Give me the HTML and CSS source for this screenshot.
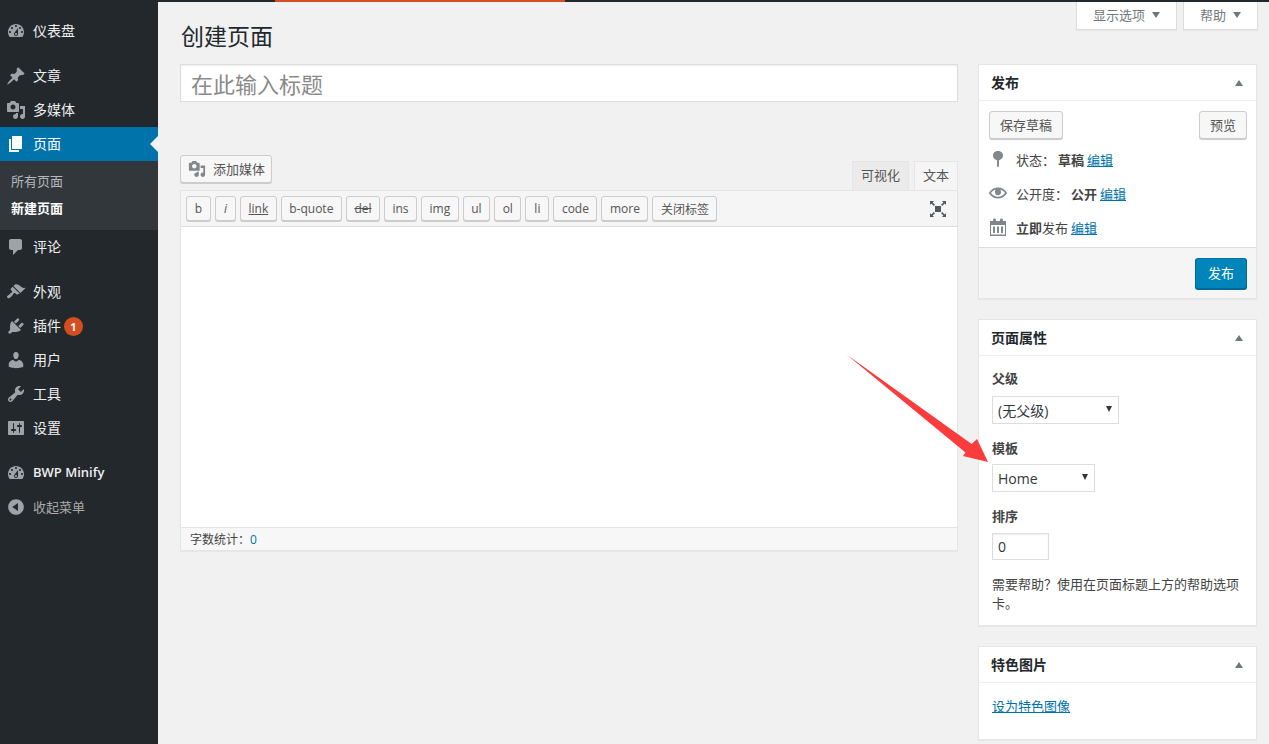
FILE: index.html
```html
<!DOCTYPE html>
<html lang="zh-CN">
<head>
    <meta charset="UTF-8">
    <meta name="viewport" content="width=device-width, initial-scale=1.0">
    <title>创建页面</title>
    <link rel="stylesheet" href="styles.css">
</head>
<body>
    <!-- Icon sprites -->
    <svg class="sprites" xmlns="http://www.w3.org/2000/svg">
        <symbol id="i-dashboard" viewBox="0 0 20 20"><path d="M3.76 16h12.48c1.1-1.37 1.76-3.11 1.76-5 0-4.42-3.58-8-8-8s-8 3.58-8 8c0 1.89.66 3.63 1.76 5zM10 4c.55 0 1 .45 1 1s-.45 1-1 1-1-.45-1-1 .45-1 1-1zM6 6c.55 0 1 .45 1 1s-.45 1-1 1-1-.45-1-1 .45-1 1-1zm8 0c.55 0 1 .45 1 1s-.45 1-1 1-1-.45-1-1 .45-1 1-1zm-5.37 5.55L12 7v6c0 1.1-.9 2-2 2s-2-.9-2-2c0-.57.24-1.08.63-1.45zM4 10c.55 0 1 .45 1 1s-.45 1-1 1-1-.45-1-1 .45-1 1-1zm12 0c.55 0 1 .45 1 1s-.45 1-1 1-1-.45-1-1 .45-1 1-1zm-5 3c0-.55-.45-1-1-1s-1 .45-1 1 .45 1 1 1 1-.45 1-1z" fill-rule="evenodd"/></symbol>
        <symbol id="i-post" viewBox="0 0 20 20"><path d="M10.44 3.02l1.82-1.82 6.36 6.35-1.83 1.82c-1.05-.68-2.48-.57-3.41.36l-.75.75c-.92.93-1.04 2.35-.35 3.41l-1.83 1.82-2.41-2.41-2.8 2.79c-.42.42-3.38 2.71-3.8 2.29s1.86-3.39 2.28-3.81l2.79-2.79L4.1 9.36l1.83-1.82c1.05.69 2.48.57 3.4-.36l.75-.75c.93-.92 1.05-2.35.36-3.41z"/></symbol>
        <symbol id="i-media" viewBox="0 0 20 20"><path d="M13 11V4c0-.55-.45-1-1-1h-1.67L9 1H5L3.67 3H2c-.55 0-1 .45-1 1v7c0 .55.45 1 1 1h10c.55 0 1-.45 1-1zM7 4.5c1.38 0 2.5 1.12 2.5 2.5S8.38 9.5 7 9.5 4.5 8.38 4.5 7 5.62 4.5 7 4.5zM14 6h5v10.5c0 1.38-1.12 2.5-2.5 2.5S14 17.88 14 16.5s1.12-2.5 2.5-2.5c.17 0 .34.02.5.05V9h-3V6zm-4 8.05V13h2v3.5c0 1.38-1.12 2.5-2.5 2.5S7 17.88 7 16.5 8.12 14 9.5 14c.17 0 .34.02.5.05z"/></symbol>
        <symbol id="i-page" viewBox="0 0 20 20"><path d="M6 15V2h10v13H6zm-1 1h8v2H3V5h2v11z"/></symbol>
        <symbol id="i-comments" viewBox="0 0 20 20"><path d="M5 2h9c1.1 0 2 .9 2 2v7c0 1.1-.9 2-2 2h-2l-5 5v-5H5c-1.1 0-2-.9-2-2V4c0-1.1.9-2 2-2z"/></symbol>
        <symbol id="i-appearance" viewBox="0 0 20 20"><path d="M14.48 11.06L7.41 3.99l1.5-1.5c.5-.56 2.3-.47 3.51.32 1.21.8 1.43 1.28 2.91 2.1 1.18.64 2.45 1.26 4.45.85zm-.71.71L6.7 4.7 4.93 6.47c-.39.39-.39 1.02 0 1.41l1.06 1.06c.39.39.39 1.03 0 1.42-.6.6-1.43 1.11-2.21 1.69-.35.26-.7.53-1.01.84C1.43 13.23.4 14.84 1.4 15.84c.99 1 2.6-.03 3.95-1.37.31-.31.58-.66.85-1.02.57-.78 1.08-1.61 1.69-2.21.39-.39 1.02-.39 1.41 0l1.06 1.06c.39.39 1.02.39 1.41 0z"/></symbol>
        <symbol id="i-plugins" viewBox="0 0 20 20"><path d="M13.11 4.36L9.87 7.6 8 5.73l3.24-3.24c.35-.34 1.05-.2 1.56.32.52.51.66 1.21.31 1.55zm-8 1.77l.91-1.12 9.01 9.01-1.19.84c-.71.71-2.63 1.16-3.82 1.16H6.14L4.9 17.26c-.59.59-1.54.59-2.12 0-.59-.58-.59-1.53 0-2.12l1.24-1.24v-3.88c0-1.13.4-3.19 1.09-3.89zm7.26 3.97l3.24-3.24c.34-.35 1.04-.21 1.55.31.52.51.66 1.21.31 1.55l-3.24 3.25z"/></symbol>
        <symbol id="i-users" viewBox="0 0 20 20"><path d="M10 9.25c-2.27 0-2.73-3.44-2.73-3.44C7 4.02 7.82 2 9.97 2c2.16 0 2.98 2.02 2.71 3.81 0 0-.41 3.44-2.68 3.44zm0 2.57L12.72 10c2.39 0 4.52 2.33 4.52 4.53v2.49s-3.65 1.13-7.24 1.13c-3.65 0-7.24-1.13-7.24-1.13v-2.49c0-2.25 1.94-4.48 4.47-4.48z"/></symbol>
        <symbol id="i-tools" viewBox="0 0 20 20"><path d="M16.68 9.77c-1.34 1.34-3.3 1.67-4.95.99l-5.41 6.52c-.99.99-2.59.99-3.58 0s-.99-2.59 0-3.57l6.52-5.42c-.68-1.65-.35-3.61.99-4.95 1.28-1.28 3.12-1.62 4.72-1.06l-2.89 2.89 2.82 2.82 2.86-2.87c.53 1.58.18 3.39-1.08 4.65zM3.81 16.21c.4.39 1.04.39 1.43 0 .4-.4.4-1.04 0-1.43-.39-.4-1.03-.4-1.43 0-.39.39-.39 1.03 0 1.43z"/></symbol>
        <symbol id="i-settings" viewBox="0 0 20 20"><path d="M18 16V4c0-.55-.45-1-1-1H3c-.55 0-1 .45-1 1v12c0 .55.45 1 1 1h14c.55 0 1-.45 1-1zM8 11h1c.55 0 1 .45 1 1s-.45 1-1 1H8v1.5c0 .28-.22.5-.5.5s-.5-.22-.5-.5V13H6c-.55 0-1-.45-1-1s.45-1 1-1h1V5.5c0-.28.22-.5.5-.5s.5.22.5.5V11zm5-2h-1c-.55 0-1-.45-1-1s.45-1 1-1h1V5.5c0-.28.22-.5.5-.5s.5.22.5.5V7h1c.55 0 1 .45 1 1s-.45 1-1 1h-1v5.5c0 .28-.22.5-.5.5s-.5-.22-.5-.5V9z"/></symbol>
        <symbol id="i-collapse" viewBox="0 0 20 20"><path d="M10 2.16c4.33 0 7.84 3.51 7.84 7.84s-3.51 7.84-7.84 7.84S2.16 14.33 2.16 10 5.71 2.16 10 2.16zm2 11.72V6.12L6.18 9.97z"/></symbol>
        <symbol id="i-pin" viewBox="0 0 20 20"><path d="M15 6.500c0 2.300-1.600 4.200-4 4.800V17l-1 1.500-1-1.500v-5.700c-2.400-.6-4-2.500-4-4.800C5 3.700 7.200 2 10 2s5 1.700 5 4.500z"/></symbol>
        <symbol id="i-eye" viewBox="-1 -1 22 22"><path d="M19.7 9.4C17.7 6 14 3.9 10 3.9S2.3 6 .3 9.4L0 10l.3.6c2 3.4 5.7 5.5 9.7 5.5s7.7-2.1 9.7-5.5l.3-.6-.3-.6zM10 14.1c-3.1 0-6-1.6-7.7-4.1C3.6 8 5.700 6.600 8 6.100c-.9.6-1.500 1.700-1.500 2.900 0 1.900 1.600 3.500 3.500 3.500s3.500-1.600 3.500-3.500c0-1.200-.6-2.300-1.500-2.900 2.300.5 4.400 1.900 5.700 3.900-1.700 2.500-4.600 4.100-7.700 4.100z"/></symbol>
        <symbol id="i-calendar" viewBox="0 0 20 20"><path d="M15 4h3v15H2V4h3V3c0-.8.7-1.5 1.5-1.5S8 2.200 8 3v1h4V3c0-.8.7-1.500 1.500-1.500S15 2.200 15 3v1zM17 17.500V8H3v9.500h14zM5 9.500h2v6.500H5V9.500zm4 0h2v6.500H9V9.500zm4 0h2v6.500h-2V9.500z" fill-rule="evenodd"/></symbol>
        <symbol id="i-fullscreen" viewBox="0 0 20 20"><path d="M1 2h5L4.600 3.400 7 5.800 5.800 7 3.400 4.600 2 6V2zm17 0v4l-1.400-1.400L14.200 7 13 5.800l2.400-2.400L14 2h4zM2 18v-4l1.400 1.400L5.800 13 7 14.200l-2.400 2.400L6 18H2zm16 0h-4l1.400-1.400L13 14.200l1.200-1.200 2.400 2.400L18 14v4zM7 7h6v6H7V7z"/></symbol>
    </svg>

    <div class="top-bar"><div class="top-progress"></div></div>

    <div class="wrap">
        <!-- Admin menu -->
        <nav class="side-menu">
            <a class="menu-item" href="#"><svg class="menu-icon"><use href="#i-dashboard"/></svg>仪表盘</a>
            <div class="menu-sep"></div>
            <a class="menu-item" href="#"><svg class="menu-icon"><use href="#i-post"/></svg>文章</a>
            <a class="menu-item" href="#"><svg class="menu-icon"><use href="#i-media"/></svg>多媒体</a>
            <a class="menu-item current" href="#"><svg class="menu-icon"><use href="#i-page"/></svg>页面</a>
            <div class="submenu">
                <a href="#">所有页面</a>
                <a class="sub-current" href="#">新建页面</a>
            </div>
            <a class="menu-item" href="#"><svg class="menu-icon"><use href="#i-comments"/></svg>评论</a>
            <div class="menu-sep"></div>
            <a class="menu-item" href="#"><svg class="menu-icon"><use href="#i-appearance"/></svg>外观</a>
            <a class="menu-item" href="#"><svg class="menu-icon"><use href="#i-plugins"/></svg>插件<span class="badge">1</span></a>
            <a class="menu-item" href="#"><svg class="menu-icon"><use href="#i-users"/></svg>用户</a>
            <a class="menu-item" href="#"><svg class="menu-icon"><use href="#i-tools"/></svg>工具</a>
            <a class="menu-item" href="#"><svg class="menu-icon"><use href="#i-settings"/></svg>设置</a>
            <div class="menu-sep"></div>
            <a class="menu-item small bold" href="#"><svg class="menu-icon"><use href="#i-dashboard"/></svg>BWP Minify</a>
            <a class="menu-item small muted" href="#"><svg class="menu-icon"><use href="#i-collapse"/></svg>收起菜单</a>
        </nav>

        <main class="content">
            <div class="screen-meta">
                <button class="meta-tab" type="button">显示选项<span class="caret-down"></span></button>
                <button class="meta-tab" type="button">帮助<span class="caret-down"></span></button>
            </div>

            <h1>创建页面</h1>

            <div class="columns">
                <!-- Editor column -->
                <div class="main-col">
                    <input class="title-input" type="text" placeholder="在此输入标题">

                    <div class="editor-tools">
                        <button class="btn add-media" type="button"><svg class="btn-icon"><use href="#i-media"/></svg>添加媒体</button>
                        <div class="editor-tabs">
                            <button class="editor-tab" type="button">可视化</button>
                            <button class="editor-tab active" type="button">文本</button>
                        </div>
                    </div>

                    <div class="editor">
                        <div class="toolbar">
                            <button class="btn tool tool-b" type="button">b</button>
                            <button class="btn tool tool-i" type="button">i</button>
                            <button class="btn tool tool-link" type="button">link</button>
                            <button class="btn tool" type="button">b-quote</button>
                            <button class="btn tool tool-del" type="button">del</button>
                            <button class="btn tool" type="button">ins</button>
                            <button class="btn tool" type="button">img</button>
                            <button class="btn tool" type="button">ul</button>
                            <button class="btn tool" type="button">ol</button>
                            <button class="btn tool" type="button">li</button>
                            <button class="btn tool" type="button">code</button>
                            <button class="btn tool" type="button">more</button>
                            <button class="btn tool" type="button">关闭标签</button>
                            <svg class="fullscreen-icon"><use href="#i-fullscreen"/></svg>
                        </div>
                        <textarea class="editor-area"></textarea>
                        <div class="status-bar">字数统计：<span class="word-count">0</span></div>
                    </div>
                </div>

                <!-- Side boxes -->
                <aside class="side-col">
                    <section class="box">
                        <div class="box-title"><h2>发布</h2><span class="caret-up"></span></div>
                        <div class="publish-actions">
                            <button class="btn" type="button">保存草稿</button>
                            <button class="btn" type="button">预览</button>
                        </div>
                        <div class="publish-row"><svg class="row-icon"><use href="#i-pin"/></svg>状态： <b>草稿</b> <a href="#">编辑</a></div>
                        <div class="publish-row"><svg class="row-icon"><use href="#i-eye"/></svg>公开度： <b>公开</b> <a href="#">编辑</a></div>
                        <div class="publish-row"><svg class="row-icon"><use href="#i-calendar"/></svg><span><b>立即</b>发布</span> <a href="#">编辑</a></div>
                        <div class="publish-footer">
                            <button class="btn primary" type="button">发布</button>
                        </div>
                    </section>

                    <section class="box">
                        <div class="box-title"><h2>页面属性</h2><span class="caret-up"></span></div>
                        <div class="box-body attrs">
                            <label class="attr-label">父级</label>
                            <span class="select-wrap parent-select">
                                <select><option>(无父级)</option></select>
                            </span>
                            <label class="attr-label">模板</label>
                            <span class="select-wrap template-select">
                                <select><option>Home</option></select>
                            </span>
                            <label class="attr-label">排序</label>
                            <input class="order-input" type="text" value="0">
                            <p class="help-text">需要帮助？使用在页面标题上方的帮助选项卡。</p>
                        </div>
                    </section>

                    <section class="box">
                        <div class="box-title"><h2>特色图片</h2><span class="caret-up"></span></div>
                        <div class="box-body thumb">
                            <a href="#">设为特色图像</a>
                        </div>
                    </section>
                </aside>
            </div>
        </main>
    </div>

    <!-- Red annotation arrow drawn over the page -->
    <svg class="annotation" viewBox="0 0 150 115">
        <path d="M.5 .5L125.700 90 131 85 142 108 117 102 119.500 98.500z"/>
    </svg>
</body>
</html>
```

FILE: styles.css
```css
/* Base */
body {
    margin: 0;
    background-color: #f1f1f1;
    color: #444;
    font-family: "Open Sans", "Noto Sans CJK SC", sans-serif;
    font-size: 13px;
    overflow: hidden;
}

a {
    color: #0073aa;
}

button,
input,
select,
textarea {
    font-family: inherit;
    box-sizing: border-box;
    margin: 0;
}

.sprites {
    display: none;
}

/* Top bar */
.top-bar {
    height: 2px;
    background-color: #23282d;
}

.top-progress {
    width: 290px;
    height: 2px;
    margin-left: 275px;
    background-color: #d54e21;
}

.wrap {
    display: flex;
    height: 742px;
}

/* Admin menu */
.side-menu {
    flex: none;
    width: 158px;
    padding-top: 12px;
    background-color: #23282d;
}

.menu-item {
    display: flex;
    align-items: center;
    height: 34px;
    box-sizing: border-box;
    padding-bottom: 2px;
    position: relative;
    color: #eee;
    font-size: 14px;
    text-decoration: none;
}

.menu-item.small {
    font-size: 13px;
}

.menu-item.bold {
    font-weight: 600;
}

.menu-item.muted {
    color: #aaa;
}

.menu-icon {
    flex: none;
    width: 20px;
    height: 20px;
    margin: 2px 7px 0 6px;
    fill: #9ea3a8;
}

.menu-sep {
    height: 11px;
}

.menu-item.current {
    background-color: #0073aa;
    color: #fff;
}

.menu-item.current .menu-icon {
    fill: #fff;
}

.menu-item.current::after {
    content: "";
    position: absolute;
    right: 0;
    top: 9px;
    border: 8px solid transparent;
    border-left-width: 0;
    border-right-color: #f1f1f1;
}

.submenu {
    display: flex;
    flex-direction: column;
    height: 69px;
    padding-top: 7px;
    box-sizing: border-box;
    background-color: #32373c;
}

.submenu a {
    height: 27px;
    line-height: 27px;
    padding-left: 11px;
    color: #b4b9be;
    text-decoration: none;
}

.submenu .sub-current {
    color: #fff;
    font-weight: 700;
}

.badge {
    width: 19px;
    height: 19px;
    margin: 2px 0 0 3px;
    border-radius: 50%;
    background-color: #d54e21;
    color: #fff;
    font-size: 11px;
    font-weight: 700;
    line-height: 19px;
    text-align: center;
}

/* Content */
.content {
    flex: 1;
    padding: 0 12px 0 22px;
}

.screen-meta {
    float: right;
    display: flex;
    gap: 6px;
    margin-right: -1px;
}

.meta-tab {
    display: flex;
    align-items: center;
    height: 28px;
    padding: 0 16px 2px;
    background-color: #fff;
    border: 1px solid #ddd;
    border-top: none;
    box-shadow: 0 1px 1px rgba(0,0,0,0.04);
    color: #72777c;
    font-size: 13px;
}

.caret-down {
    width: 0;
    height: 0;
    margin-left: 7px;
    border: 4px solid transparent;
    border-top: 6px solid #72777c;
    border-bottom: none;
}

h1 {
    margin: 0 0 13px;
    padding: 19px 0 0 1px;
    color: #23282d;
    font-size: 23px;
    font-weight: 400;
    line-height: 30px;
}

.columns {
    display: flex;
    gap: 20px;
}

.main-col {
    flex: 1;
    min-width: 0;
}

.side-col {
    flex: none;
    width: 279px;
}

/* Title */
.title-input {
    display: block;
    width: 100%;
    height: 38px;
    padding: 5px 10px 3px;
    background-color: #fff;
    border: 1px solid #ddd;
    font-size: 22px;
    box-shadow: inset 0 1px 2px rgba(0,0,0,0.07);
}

.title-input::placeholder {
    color: #8a8a8a;
}

/* Buttons */
.btn {
    height: 28px;
    padding: 0 10px 2px;
    background-color: #f7f7f7;
    border: 1px solid #ccc;
    border-radius: 3px;
    box-shadow: 0 1px 0 #ccc;
    color: #555;
    font-size: 13px;
    white-space: nowrap;
}

.btn.primary {
    width: 52px;
    height: 31px;
    padding: 0 0 2px;
    background-color: #0085ba;
    border-color: #0073aa #006799 #006799;
    box-shadow: 0 1px 0 #006799;
    color: #fff;
}

/* Editor */
.editor-tools {
    display: flex;
    justify-content: space-between;
    align-items: flex-start;
    margin-top: 53px;
    height: 35px;
}

.add-media {
    display: flex;
    align-items: center;
    width: 92px;
    padding: 0 7px 2px;
    gap: 7px;
}

.btn-icon {
    flex: none;
    width: 18px;
    height: 18px;
    margin-top: 2px;
    fill: #82878c;
}

.editor-tabs {
    display: flex;
    gap: 5px;
    margin-top: 6px;
}

.editor-tab {
    height: 29px;
    padding: 0 8px 3px;
    background-color: #ebebeb;
    border: 1px solid #e5e5e5;
    border-bottom: none;
    color: #555;
    font-size: 13px;
}

.editor-tab.active {
    background-color: #f5f5f5;
}

.editor {
    border: 1px solid #e5e5e5;
    border-top: none;
    box-shadow: 0 1px 1px rgba(0,0,0,0.04);
}

.toolbar {
    display: flex;
    align-items: center;
    gap: 4px;
    height: 37px;
    padding: 0 5px;
    box-sizing: border-box;
    background-color: #f5f5f5;
    border-top: 1px solid #e5e5e5;
    border-bottom: 1px solid #ddd;
}

.btn.tool {
    height: 25px;
    min-width: 24px;
    padding: 0 7.5px;
    font-size: 12px;
}

.btn.tool-b {
    min-width: 25px;
}

.btn.tool-i {
    min-width: 21px;
    font-style: italic;
}

.tool-link {
    text-decoration: underline;
}

.tool-del {
    text-decoration: line-through;
}

.fullscreen-icon {
    width: 20px;
    height: 20px;
    margin-left: auto;
    margin-right: 4px;
    fill: #50575e;
}

.editor-area {
    display: block;
    width: 100%;
    height: 300px;
    padding: 10px;
    background-color: #fff;
    border: none;
    resize: none;
}

.status-bar {
    height: 23px;
    padding-left: 9px;
    box-sizing: border-box;
    background-color: #f7f7f7;
    border-top: 1px solid #e5e5e5;
    font-size: 12px;
    line-height: 23px;
}

.word-count {
    color: #0073aa;
}

/* Side boxes */
.box {
    margin-bottom: 20px;
    background-color: #fff;
    border: 1px solid #e5e5e5;
    box-shadow: 0 1px 1px rgba(0,0,0,0.04);
}

.box-title {
    display: flex;
    justify-content: space-between;
    align-items: center;
    height: 36px;
    padding: 0 13px 0 12px;
    box-sizing: border-box;
    border-bottom: 1px solid #eee;
}

.box-title h2 {
    margin: 0;
    padding-bottom: 2px;
    color: #23282d;
    font-size: 14px;
    font-weight: 700;
}

.caret-up {
    width: 0;
    height: 0;
    border: 4px solid transparent;
    border-bottom: 6px solid #72777c;
    border-top: none;
}

.publish-actions {
    display: flex;
    justify-content: space-between;
    padding: 10px 9px 0 10px;
    margin-bottom: 3px;
}

.publish-row {
    display: flex;
    align-items: center;
    gap: 3px;
    height: 34px;
    padding-left: 10px;
    color: #444;
}

.row-icon {
    flex: none;
    width: 20px;
    height: 20px;
    margin-left: -1px;
    margin-right: 5px;
    fill: #82878c;
}

.publish-footer {
    display: flex;
    justify-content: flex-end;
    margin-top: 3px;
    padding: 10px 9px 9px 10px;
    background-color: #f5f5f5;
    border-top: 1px solid #ddd;
}

.box-body {
    padding: 0 13px;
}

.attrs {
    display: flex;
    flex-direction: column;
    align-items: flex-start;
    padding-top: 14px;
    padding-bottom: 12px;
}

.attr-label {
    margin-bottom: 7px;
    color: #444;
    font-weight: 600;
    line-height: 18px;
}

.attr-label:first-child {
    margin-top: -1px;
    margin-bottom: 9px;
}

.select-wrap {
    display: block;
    position: relative;
    height: 28px;
    margin-bottom: 15px;
}

.select-wrap::after {
    content: "";
    position: absolute;
    right: 7px;
    top: 10px;
    border: 3px solid transparent;
    border-top: 6px solid #32373c;
    border-bottom: none;
}

.select-wrap select {
    appearance: none;
    display: block;
    width: 100%;
    height: 28px;
    padding: 0 5px;
    background-color: #fff;
    border: 1px solid #ddd;
    border-radius: 0;
    color: #32373c;
    font-size: 14px;
}

.parent-select {
    width: 127px;
}

.template-select {
    width: 103px;
}

.order-input {
    width: 57px;
    height: 27px;
    margin-top: 1px;
    padding: 0 5px;
    background-color: #fff;
    border: 1px solid #ddd;
    color: #32373c;
    font-size: 14px;
    box-shadow: inset 0 1px 2px rgba(0,0,0,0.07);
}

.help-text {
    margin: 15px 0 0;
    color: #444;
    line-height: 19px;
}

.thumb {
    padding-top: 14px;
    height: 42px;
    line-height: 19px;
}

/* Annotation */
.annotation {
    position: absolute;
    left: 846px;
    top: 354px;
    width: 150px;
    height: 115px;
    fill: #fb3c3c;
}
```
